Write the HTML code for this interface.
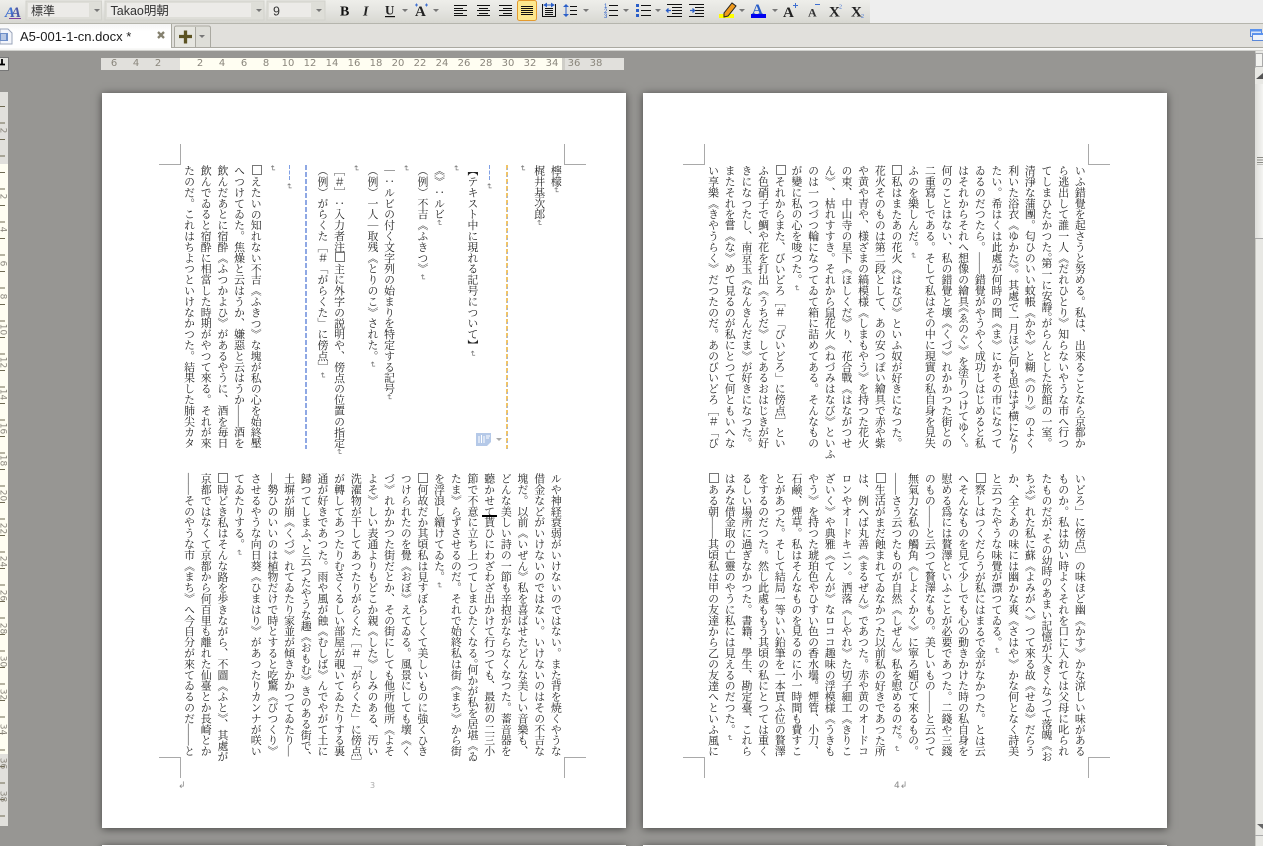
<!DOCTYPE html>
<html lang="ja"><head><meta charset="utf-8"><title>A5-001-1-cn.docx</title>
<style>
html,body{margin:0;padding:0;width:1263px;height:846px;overflow:hidden;background:#979693}
body{position:relative;font-family:"Liberation Sans","Noto Sans CJK JP",sans-serif}
.a{position:absolute}
#tb{left:0;top:0;width:870px;height:23px;background:linear-gradient(#eeeeea,#e6e6e2 40%,#d7d7d1)}
#tr{left:870px;top:0;width:393px;height:23px;background:#eeeeee}
#tl{left:0;top:23px;width:1263px;height:1px;background:#b5b5ad}
#tabs{left:0;top:24px;width:1263px;height:23px;background:#e1e0dc}
#tab{left:0;top:24px;width:171px;height:24px;background:linear-gradient(#f5f5f5,#fff 30%);border-right:1px solid #a9a99f}
#tabline{left:171px;top:47px;width:1092px;height:1px;background:#aaa9a1}
#under{left:0;top:48px;width:1263px;height:3px;background:linear-gradient(#fafafa,#f4f4f2 70%,#a3a29e)}
.tt{left:20px;top:28px;font-size:13px;line-height:17px;color:#1b1b1b;white-space:nowrap}
.page{background:#fff;box-shadow:0 1px 8px rgba(0,0,0,.55)}
.rul{left:101px;top:58px;height:12px;background:#e1e0dc}
.n{position:absolute;top:58px;height:12px;font:10px/12px "DejaVu Sans",sans-serif;color:#8a867c;width:20px;text-align:center}
.v{position:absolute;left:0;width:8px;height:12px;overflow:hidden}
.v b{position:absolute;font:400 9px/9px "DejaVu Sans",sans-serif;color:#8a867c;left:-4px;top:1px;width:12px;text-align:center;transform:rotate(90deg)}
.txt{position:absolute;width:383.33px;height:286px;writing-mode:vertical-rl;text-orientation:mixed;line-height:16.667px;font-size:10.9px;font-family:"Liberation Serif","Noto Serif CJK JP","Noto Serif CJK SC",serif;color:#222;white-space:nowrap;text-spacing-trim:space-all;font-kerning:none}
.txt i{font:normal 8px/0 "DejaVu Sans",sans-serif;color:#777;text-orientation:sideways}
.h{letter-spacing:-5.45px}
.sq{display:inline-block;position:relative;left:-1px;width:10px;height:10px;border:1px solid #777;margin:0 0 1px 0;box-sizing:border-box;vertical-align:middle;background:#fff}
.cm{position:absolute;background:#a9a9a9}
.ft{position:absolute;font:8px/10px "DejaVu Sans",sans-serif;color:#888;white-space:nowrap}
</style></head><body>
<div class="a" id="tb"></div><div class="a" id="tr"></div><div class="a" id="tl"></div>
<div class="a" id="tabs"></div><div class="a" id="tabline"></div><div class="a" id="under"></div><div class="a" id="tab"></div>
<div class="a tt">A5-001-1-cn.docx *</div>

<svg class="a" style="left:0;top:0" width="1263" height="50" viewBox="0 0 1263 50" font-family="Liberation Serif, serif">
<!-- style icon -->
<text x="5" y="17" font-size="15" font-style="italic" font-weight="700" fill="#3f6fd0">A</text>
<text x="11" y="17" font-size="15" font-style="italic" font-weight="700" fill="#4a58a8">A</text>
<rect x="9" y="18" width="12" height="1" fill="#7a3f9c"/>
<!-- combos -->
<rect x="26" y="1" width="75.500" height="19" fill="#dedeD8" stroke="#d2d2cc"/><rect x="28" y="3" width="61" height="14" fill="#ecebe8"/>
<rect x="105" y="1" width="159" height="19" fill="#dedeD8" stroke="#d2d2cc"/><rect x="107" y="3" width="144" height="14" fill="#ecebe8"/>
<rect x="267" y="1" width="58" height="19" fill="#dedeD8" stroke="#d2d2cc"/><rect x="269" y="3" width="42" height="14" fill="#ecebe8"/>
<text x="31" y="15" font-size="12" font-family="Liberation Sans, Noto Sans CJK JP, sans-serif" fill="#333">標準</text>
<text x="110.500" y="15" font-size="12.500" font-family="Liberation Sans, Noto Sans CJK JP, sans-serif" fill="#333">Takao明朝</text>
<text x="273" y="15.500" font-size="12.500" font-family="Liberation Sans, sans-serif" fill="#333">9</text>
<g fill="#777"><path d="M94 9h6l-3 3zM256 9h6l-3 3zM316 9h6l-3 3zM402 9h6l-3 3zM433 9h6l-3 3zM583 9h6l-3 3zM623 9h6l-3 3zM655 9h6l-3 3zM739 9h6l-3 3zM772 9h6l-3 3z"/></g>
<!-- B I U A -->
<text x="340" y="15.500" font-size="14" font-weight="700" fill="#111">B</text>
<text x="363" y="15.500" font-size="14" font-style="italic" font-weight="700" fill="#222">I</text>
<text x="385" y="14.500" font-size="13" font-weight="700" fill="#222">U</text><rect x="385" y="16" width="10" height="1.200" fill="#111"/>
<text x="415" y="16" font-size="15" font-weight="700" fill="#222">A</text>
<path d="M415 5h3M416.500 3.500v3M425 5h3M426.500 3.500v3" stroke="#3f6fd0" stroke-width="1" fill="none"/>
<!-- align -->
<g stroke="#111" stroke-width="1" fill="none">
<path d="M454 5.500h13M454 8.500h9M454 10.500h13M454 13.500h9M454 15.500h13"/>
<path d="M477 5.500h13M479 8.500h9M477 10.500h13M479 13.500h9M477 15.500h13"/>
<path d="M499 5.500h13M503 8.500h9M499 10.500h13M503 13.500h9M499 15.500h13"/>
</g>
<rect x="517.500" y="0.500" width="19" height="20" rx="2" fill="#fde88e" stroke="#e39a2f"/>
<path d="M521 6.500h12M521 8.500h12M521 10.500h12M521 12.500h12M521 14.500h12" stroke="#111" fill="none"/>
<g stroke="#111" fill="none"><path d="M542.500 4v12M555.500 4v12M545 8.500h8M545 10.500h8M545 12.500h8M545 14.500h8M542 16.500h14"/></g>
<path d="M544 5l2.500-1.500v3zM554 5l-2.500-1.500v3zM546 5h5" stroke="#2a5ec8" fill="#2a5ec8"/>
<g stroke="#111" fill="none"><path d="M570 6.500h7M570 10.500h7M570 14.500h7"/></g>
<path d="M566 4l-3 3h6zM566 17l-3 -3h6z" fill="#2a5ec8"/><rect x="565.500" y="7" width="1" height="7" fill="#2a5ec8"/>
<!-- lists -->
<text x="604" y="8" font-size="6" font-family="Liberation Sans" fill="#2a5ec8">1</text><text x="604" y="13" font-size="6" font-family="Liberation Sans" fill="#2a5ec8">2</text><text x="604" y="18" font-size="6" font-family="Liberation Sans" fill="#2a5ec8">3</text>
<path d="M609 5.500h9M609 10.500h9M609 15.500h9M641 5.500h10M641 10.500h10M641 15.500h10" stroke="#111" fill="none"/>
<path d="M636 4h3v3h-3zM636 9h3v3h-3zM636 14h3v3h-3z" fill="#2a5ec8"/>
<g stroke="#111" fill="none"><path d="M667 4.500h15M672 7.500h10M672 10.500h10M672 13.500h10M667 16.500h15M689 4.500h15M695 7.500h9M695 10.500h9M695 13.500h9M689 16.500h15"/></g>
<path d="M671 10.500l-4 0M668.500 8.500l-2 2 2 2M690 10.500h4M692.500 8.500l2 2-2 2" stroke="#2a5ec8" stroke-width="1.300" fill="none"/>
<!-- highlight -->
<rect x="719" y="14" width="15" height="4" fill="#ffff00"/>
<path d="M724 13l8-10 4 3-8 10-4 1z" fill="#ef9a1e" stroke="#222" stroke-width="1"/>
<!-- font colour -->
<text x="752" y="14" font-size="15" font-weight="700" fill="#2a5ec8">A</text><rect x="751" y="14" width="15" height="4" fill="#0000f0"/>
<!-- grow shrink sup sub -->
<text x="783" y="17" font-size="15" font-weight="700" fill="#222">A</text><path d="M793 5.500h5M795.500 3v5" stroke="#3f6fd0" fill="none"/>
<text x="808" y="16.500" font-size="12" font-weight="700" fill="#333">A</text><path d="M815 4.500h5" stroke="#3f6fd0" fill="none"/>
<text x="829" y="16.500" font-size="15" font-weight="700" fill="#222">X</text><text x="839" y="8.500" font-size="6" fill="#3f6fd0">2</text>
<text x="851" y="16.500" font-size="15" font-weight="700" fill="#222">X</text><text x="861" y="18" font-size="6" fill="#3f6fd0">2</text>
<!-- tab icons -->
<path d="M0 29h8l4 4v11H0z" fill="#f4f6fb" stroke="#9aa4ba"/><rect x="-1" y="33" width="9" height="8" fill="#6f8fc8"/><path d="M1 35h5M1 37h5M1 39h5" stroke="#fff"/>
<path d="M158 32l6 6M164 32l-6 6" stroke="#85816f" stroke-width="2.300"/>
<path d="M174.500 47v-19q0-2 2-2h32q2 0 2 2v19" fill="#deded8" stroke="#aaa9a1"/>
<rect x="175" y="27" width="20" height="20" fill="#e6e6e0"/><path d="M195.500 27v20" stroke="#aaa9a1"/>
<path d="M179 36.500h13M185.500 30.500v13" stroke="#5c5322" stroke-width="3.300"/>
<path d="M199 35h6l-3 3z" fill="#777"/>
<!-- top right window icon -->
<rect x="1250.500" y="29.500" width="11" height="7" fill="#d9e5f8" stroke="#5a87d8"/><rect x="1250" y="29" width="12" height="2.500" fill="#5a92ee"/>
<rect x="1252.500" y="33.500" width="11" height="7" fill="#eef3fb" stroke="#5a87d8"/><rect x="1252" y="33" width="12" height="2" fill="#5a92ee"/>
</svg>

<!-- top ruler -->
<div class="a rul" style="width:523px"></div>
<div class="a" style="left:180px;top:58px;width:382px;height:12px;background:#fffef2"></div>
<div class="a" style="left:562px;top:58px;width:3px;height:12px;background:#cfcec8"></div>
<span class="n" style="left:104px">6</span><span class="n" style="left:126px">4</span><span class="n" style="left:148px">2</span>
<span class="n" style="left:190px">2</span><span class="n" style="left:212px">4</span><span class="n" style="left:234px">6</span><span class="n" style="left:256px">8</span><span class="n" style="left:278px">10</span><span class="n" style="left:300px">12</span><span class="n" style="left:322px">14</span><span class="n" style="left:344px">16</span><span class="n" style="left:366px">18</span><span class="n" style="left:388px">20</span><span class="n" style="left:410px">22</span><span class="n" style="left:432px">24</span><span class="n" style="left:454px">26</span><span class="n" style="left:476px">28</span><span class="n" style="left:498px">30</span><span class="n" style="left:520px">32</span><span class="n" style="left:542px">34</span><span class="n" style="left:564px">36</span><span class="n" style="left:586px">38</span>

<!-- corner -->
<div class="a" style="left:-2px;top:57px;width:9px;height:12px;background:#e4e4e0;border:1px solid #777"></div>
<svg class="a" style="left:0;top:57px" width="6" height="10"><path d="M0 7.500h5M2 2v5" stroke="#000" stroke-width="1.800" fill="none"/></svg>

<!-- left ruler -->
<div class="a" style="left:0;top:92px;width:8px;height:734px;background:#e1e0dc"></div>
<div class="a" style="left:0;top:164px;width:8px;height:590px;background:#fffef2"></div>
<div class="a" style="left:0;top:106px;width:5px;height:720px;background:repeating-linear-gradient(#6f6a52 0,#6f6a52 1px,transparent 1px,transparent 16.5px)"></div>
<div class="v" style="top:125px"><b>2</b></div>
<div class="v" style="top:191px"><b>2</b></div><div class="v" style="top:224px"><b>4</b></div><div class="v" style="top:258px"><b>6</b></div><div class="v" style="top:291px"><b>8</b></div><div class="v" style="top:324px"><b>10</b></div><div class="v" style="top:357px"><b>12</b></div><div class="v" style="top:389px"><b>14</b></div><div class="v" style="top:423px"><b>16</b></div><div class="v" style="top:455px"><b>18</b></div><div class="v" style="top:490px"><b>20</b></div><div class="v" style="top:523px"><b>22</b></div><div class="v" style="top:556px"><b>24</b></div><div class="v" style="top:590px"><b>26</b></div><div class="v" style="top:623px"><b>28</b></div><div class="v" style="top:656px"><b>30</b></div><div class="v" style="top:689px"><b>32</b></div><div class="v" style="top:724px"><b>34</b></div><div class="v" style="top:758px"><b>36</b></div><div class="v" style="top:791px"><b>38</b></div>

<!-- scrollbar -->
<div class="a" style="left:1255px;top:51px;width:8px;height:795px;background:#e8e8e4;border-left:1px solid #c8c8c2;box-sizing:border-box"></div>
<div class="a" style="left:1255px;top:53px;width:8px;height:14px;background:#f2f2ef;border:1px solid #aaa;box-sizing:border-box"></div>
<div class="a" style="left:1255px;top:68px;width:8px;height:16px;background:#e8e8e4"></div>
<svg class="a" style="left:1255px;top:70px" width="8" height="10"><path d="M8 3v6H1z" fill="#555"/></svg>
<div class="a" style="left:1255px;top:84px;width:8px;height:155px;background:linear-gradient(90deg,#dededa,#f4f4f2);border-bottom:1px solid #aaa;box-sizing:border-box"></div>
<div class="a" style="left:1257px;top:157px;width:6px;height:8px;background:repeating-linear-gradient(#8b8b85 0,#8b8b85 1px,transparent 1px,transparent 2.500px)"></div>
<svg class="a" style="left:1255px;top:823px" width="8" height="8"><path d="M2 1h6v5z" fill="#666"/></svg>
<div class="a" style="left:1255px;top:835px;width:8px;height:1px;background:#aaa"></div>

<!-- pages -->
<div class="a page" style="left:102px;top:93px;width:524px;height:735px"></div>
<div class="a page" style="left:643px;top:93px;width:524px;height:735px"></div>
<div class="a page" style="left:102px;top:845px;width:524px;height:10px"></div>
<div class="a page" style="left:643px;top:845px;width:524px;height:10px"></div>

<!-- crop marks page 1 -->
<div class="cm" style="left:159px;top:164px;width:22px;height:1px"></div><div class="cm" style="left:180px;top:144px;width:1px;height:21px"></div>
<div class="cm" style="left:564px;top:164px;width:22px;height:1px"></div><div class="cm" style="left:564px;top:144px;width:1px;height:21px"></div>
<div class="cm" style="left:159px;top:757px;width:22px;height:1px"></div><div class="cm" style="left:180px;top:757px;width:1px;height:21px"></div>
<div class="cm" style="left:564px;top:757px;width:22px;height:1px"></div><div class="cm" style="left:564px;top:757px;width:1px;height:21px"></div>
<!-- crop marks page 2 -->
<div class="cm" style="left:683px;top:164px;width:22px;height:1px"></div><div class="cm" style="left:704px;top:144px;width:1px;height:21px"></div>
<div class="cm" style="left:1088px;top:164px;width:22px;height:1px"></div><div class="cm" style="left:1088px;top:144px;width:1px;height:21px"></div>
<div class="cm" style="left:683px;top:757px;width:22px;height:1px"></div><div class="cm" style="left:704px;top:757px;width:1px;height:21px"></div>
<div class="cm" style="left:1088px;top:757px;width:22px;height:1px"></div><div class="cm" style="left:1088px;top:757px;width:1px;height:21px"></div>

<!-- page 1 upper -->
<div class="txt" style="left:180px;top:165px">檸檬<i>↵</i><br>梶井基次郎<i>↵</i><br><i>↵</i><br>&nbsp;<br><i style="margin-top:18px">↵</i><br>【テキスト中に現れる記号について】<i>↵</i><br><i>↵</i><br>《》：ルビ<i>↵</i><br>（例）不吉《ふきつ》<i>↵</i><br><i>↵</i><br>｜：ルビの付く文字列の始まりを特定する記号<i>↵</i><br>（例）一人｜取残《とりのこ》された。<i>↵</i><br><i>↵</i><br>［＃］：入力者注<span class="sq"></span>主に外字の説明や、傍点の位置の指定<i>↵</i><br>（例）がらくた［＃「がらくた」に傍点］<i>↵</i><br>&nbsp;<br><i style="margin-top:18px">↵</i><br><i>↵</i><br><span class="sq"></span>えたいの知れない不吉《ふきつ》な塊が私の心を始終壓<br>へつけてゐた。焦燥と云はうか、嫌惡と云はうか――酒を<br>飲んだあとに宿酔《ふつかよひ》があるやうに、酒を毎日<br>飲んでゐると宿酔に相當した時期がやつて來る。それが來<br>たのだ。これはちよつといけなかつた。結果した肺尖カタ</div>

<!-- page 1 lower -->
<div class="txt" style="left:180px;top:473px">ルや神経衰弱がいけないのではない。また背を焼くやうな<br>借金などがいけないのではない。いけないのはその不吉な<br>塊だ。以前《いぜん》私を喜ばせたどんな美しい音樂も、<br>どんな美しい詩の一節も辛抱がならなくなつた。蓄音器を<br>聽かせて貰ひにわざわざ出かけて行つても、最初の二三小<br>節で不意に立ち上つてしまひたくなる<span class="h">。</span>何かが私を居堪《ゐ<br>たま》らずさせるのだ。それで始終私は街《まち》から街<br>を浮浪し續けてゐた。<i>↵</i><br><span class="sq"></span>何故だか其頃私は見すぼらしくて美しいものに強くひき<br>つけられたのを覺《おぼ》えてゐる。風景にしても壞《く<br>づ》れかかつた街だとか、その街にしても他所他所《よそ<br>よそ》しい表通よりもどこか親《した》しみのある、汚い<br>洗濯物が干してあつたりがらくた［＃「がらくた」に傍点］<br>が轉してあつたりむさくるしい部屋が覗いてゐたりする裏<br>通が好きであつた。雨や風が蝕《むしば》んでやがて土に<br>歸つてしまふ<span class="h">、</span>と云つたやうな趣《おもむ》きのある街で、<br>土塀が崩《くづ》れてゐたり家並が傾きかかつてゐたり―<br>―勢ひのいいのは植物だけで時とすると吃驚《びつくり》<br>させるやうな向日葵《ひまはり》があつたりカンナが咲い<br>てゐたりする。<i>↵</i><br><span class="sq"></span>時どき私はそんな路を歩きながら、不圖《ふと<span class="h">》</span>、其處が<br>京都ではなくて京都から何百里も離れた仙臺とか長崎とか<br>――そのやうな市《まち》へ今自分が來てゐるのだ――と</div>

<!-- page 2 upper -->
<div class="txt" style="left:704px;top:165px">いふ錯覺を起さうと努める。私は、出來ることなら京都か<br>ら逃出して誰一人《だれひとり》知らないやうな市へ行つ<br>てしまひたかつた<span class="h">。</span>第一に安靜<span class="h">。</span>がらんとした旅館の一室。<br>清淨な蒲團。匂ひのいい蚊帳《かや》と糊《のり》のよく<br>利いた浴衣《ゆかた<span class="h">》</span>。其處で一月ほど何も思はず横になり<br>たい。希はくは此處が何時の間《ま》にかその市になつて<br>ゐるのだつたら。――錯覺がやうやく成功しはじめると私<br>はそれからそれへ想像の繪<span class="h">具</span>《ゑのぐ》を塗りつけてゆく。<br>何のことはない、私の錯覺と壞《くづ》れかかつた街との<br>二重寫しである。そして私はその中に現實の私自身を見失<br>ふのを樂しんだ。<i>↵</i><br><span class="sq"></span>私はまたあの花火《はなび》といふ奴が好きになつた。<br>花火そのものは第二段として、あの安つぽい繪具で赤や紫<br>や黄や青や、様ざまの縞模様《しまもやう》を持つた花火<br>の束、中山寺の星下《ほしくだ》り、花合戰《はながつせ<br>ん》、枯れすすき。それから鼠花火《ねづみはなび》といふ<br>のは一つづつ輪になつてゐて箱に詰めてある。そんなもの<br>が變に私の心を唆つた。<i>↵</i><br><span class="sq"></span>それからまた、びいどろ［＃「びいどろ」に傍点］とい<br>ふ色硝子で鯛や花を打出《うちだ》してあるおはじきが好<br>きになつたし、南京玉《なんきんだま》が好きになつた。<br>またそれを嘗《な》めて見るのが私にとつて何ともいへな<br>い享樂《きやうらく》だつたのだ。あのびいどろ［＃「び</div>

<!-- page 2 lower -->
<div class="txt" style="left:704px;top:473px">いどろ」に傍点］の味ほど幽《かす》かな涼しい味がある<br>ものか。私は幼い時よくそれを口に入れては父母に叱られ<br>たものだが<span class="h">、</span>その幼時のあまい記憶が大きくなつて落魄《お<br>ちぶ》れた私に蘇《よみがへ》つて來る故《せゐ》だらう<br>か、全くあの味には幽かな爽《さはや》かな何となく詩美<br>と云つたやうな味覺が漂つてゐる。<i>↵</i><br><span class="sq"></span>察しはつくだらうが私にはまるで金がなかつた。とは云<br>へそんなものを見て少しでも心の動きかけた時の私自身を<br>慰める爲には贅澤といふことが必要であつた。二錢や三錢<br>のもの――と云つて贅澤なもの。美しいもの――と云つて<br>無氣力な私の觸角《しよくかく》に寧ろ媚びて來るもの。<br>――さう云つたものが自然《しぜん》私を慰めるのだ。<i>↵</i><br><span class="sq"></span>生活がまだ蝕まれてゐなかつた以前私の好きであつた所<br>は、例へば丸善《まるぜん》であつた。赤や黄のオードコ<br>ロンやオードキニン。洒落《しやれ》た切子細工《きりこ<br>ざいく》や典雅《てんが》なロココ趣味の浮模様《うきも<br>やう》を持つた琥珀色やひすい色の香水壜。煙管、小刀、<br>石鹸、煙草。私はそんなものを見るのに小一時間も費すこ<br>とがあつた。そして結局一等いい鉛筆を一本買ふ位の贅澤<br>をするのだつた。然し此處ももう其頃の私にとつては重く<br>るしい場所に過ぎなかつた。書籍、學生、勘定臺、これら<br>はみな借金取の亡靈のやうに私には見えるのだつた。<i>↵</i><br><span class="sq"></span>ある朝――其頃私は甲の友達から乙の友達へといふ風に</div>

<!-- section dashed lines -->
<div class="a" style="left:506px;top:165px;width:1px;height:284px;background:repeating-linear-gradient(#f0c468 0,#f0c468 5px,transparent 5px,transparent 7px)"></div>
<div class="a" style="left:507px;top:165px;width:1px;height:284px;background:repeating-linear-gradient(#f0c468 0,#f0c468 3px,#9fb2de 3px,#9fb2de 5px,transparent 5px,transparent 7px)"></div>
<div class="a" style="left:305px;top:165px;width:2px;height:284px;background:repeating-linear-gradient(#8fa8e4 0,#8fa8e4 5px,transparent 5px,transparent 7px)"></div>
<div class="a" style="left:489px;top:165px;width:1px;height:15px;background:repeating-linear-gradient(#7f9fe4 0,#7f9fe4 4px,transparent 4px,transparent 5.500px)"></div>
<div class="a" style="left:289px;top:165px;width:1px;height:15px;background:repeating-linear-gradient(#7f9fe4 0,#7f9fe4 4px,transparent 4px,transparent 5.500px)"></div>

<!-- smart tag -->
<svg class="a" style="left:476px;top:433px" width="30" height="13"><path d="M0 0h15v9l-4 4H0z" fill="#b5c9e8"/><path d="M3 3v7M5.500 2v8M8 3v7M10 3h4M10 5h3" stroke="#fff" fill="none"/><path d="M20 5h6l-3 3z" fill="#aaa"/></svg>

<!-- cursor -->
<div class="a" style="left:482px;top:515px;width:15px;height:2px;background:#000"></div>

<!-- footers -->
<div class="ft" style="left:178px;top:781px;font-size:9px">↲</div>
<div class="ft" style="left:370px;top:781px;color:#aaa">3</div>
<div class="ft" style="left:894px;top:781px;font-size:9px">4↲</div>
</body></html>
